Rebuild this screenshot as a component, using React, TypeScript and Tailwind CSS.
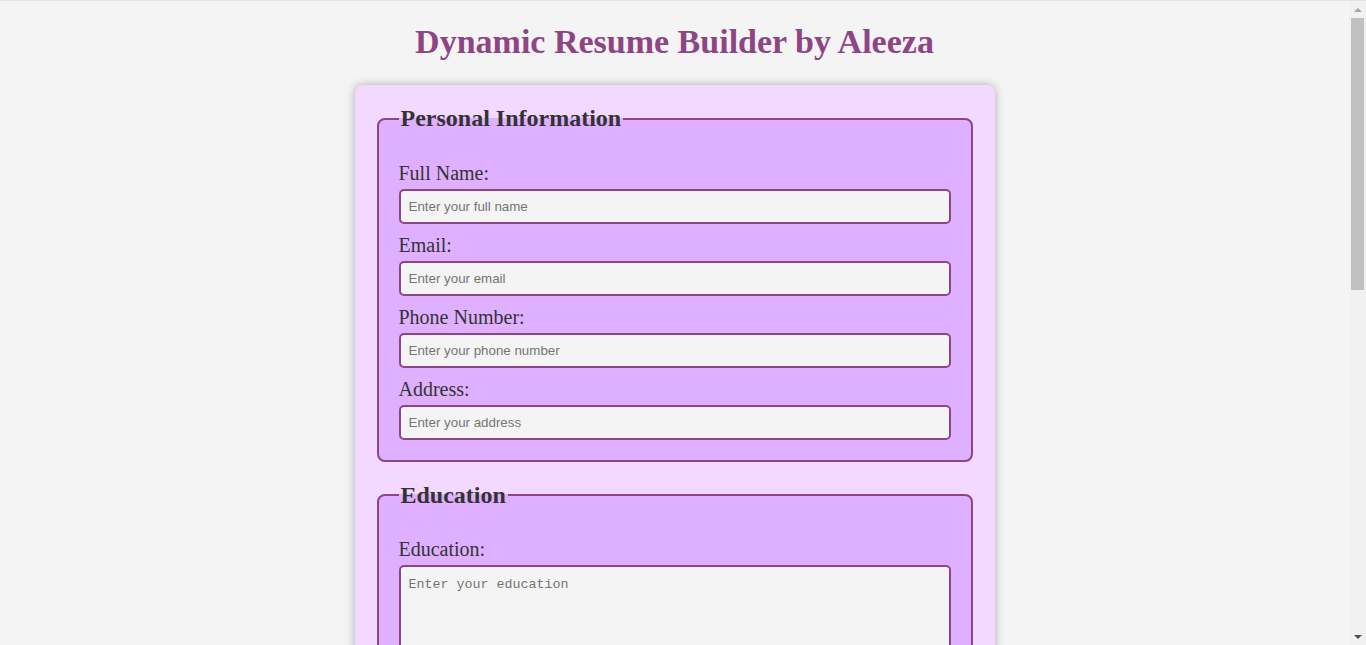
import React from "react";

type Field = { label: string; placeholder: string; kind?: "input" | "textarea" };

const sections: { title: string; fields: Field[] }[] = [
  {
    title: "Personal Information",
    fields: [
      { label: "Full Name:", placeholder: "Enter your full name" },
      { label: "Email:", placeholder: "Enter your email" },
      { label: "Phone Number:", placeholder: "Enter your phone number" },
      { label: "Address:", placeholder: "Enter your address" },
    ],
  },
  {
    title: "Education",
    fields: [{ label: "Education:", placeholder: "Enter your education", kind: "textarea" }],
  },
  {
    title: "Work Experience",
    fields: [{ label: "Experience:", placeholder: "Enter your work experience", kind: "textarea" }],
  },
  {
    title: "Skills",
    fields: [{ label: "Skills:", placeholder: "Enter your skills", kind: "textarea" }],
  },
];

function FormField({ label, placeholder, kind }: Field) {
  return (
    <div className="mt-[10px] first-of-type:mt-[9px]">
      <label className="block mb-[4px] text-[20px] leading-[23px] text-[#333]">{label}</label>
      {kind === "textarea" ? (
        <textarea
          placeholder={placeholder}
          className="block w-full h-[110px] px-2 py-[8px] bg-[#f4f4f4] border-2 border-[#8e4585] rounded-[5px] text-[13.33px] font-['Liberation_Mono',monospace] text-[#333] placeholder:text-[#757575] outline-none"
        />
      ) : (
        <input
          type="text"
          placeholder={placeholder}
          className="block w-full h-[35px] px-2 bg-[#f4f4f4] border-2 border-[#8e4585] rounded-[5px] text-[13.33px] font-['Liberation_Sans',Arial,sans-serif] text-[#333] placeholder:text-[#757575] outline-none"
        />
      )}
    </div>
  );
}

// the window's scrollbar, drawn as in the screenshot
function Scrollbar() {
  return (
    <div className="w-[17px] shrink-0 h-full bg-[#f1f1f1] flex flex-col items-center">
      <div className="h-[17px] flex items-center justify-center">
        <div className="w-0 h-0 border-x-[4px] border-x-transparent border-b-[4px] border-b-[#a3a3a3]" />
      </div>
      <div className="w-[13px] h-[272px] bg-[#c1c1c1]" />
      <div className="flex-1" />
      <div className="h-[17px] flex items-center justify-center">
        <div className="w-0 h-0 border-x-[4px] border-x-transparent border-t-[4px] border-t-[#505050]" />
      </div>
    </div>
  );
}

export default function App() {
  return (
    <div className="h-screen flex overflow-hidden bg-[#f4f4f4] border-t border-[#e2e2e2] font-['Liberation_Serif','Times_New_Roman',serif]">
      <main className="flex-1 min-w-0 overflow-hidden pb-10">
        <h1 className="mt-[21px] mb-[24px] text-center text-[34px] leading-[39px] font-bold text-[#8e4585]">
          Dynamic Resume Builder by Aleeza
        </h1>

        <div className="w-[640px] mx-auto p-5 bg-[#f3d9ff] rounded-[8px] shadow-[0_0_10px_rgba(0,0,0,0.3)]">
          {sections.map((s) => (
            <fieldset
              key={s.title}
              className="mx-[2px] mb-5 p-5 bg-[#dfb0ff] border-2 border-[#8e4585] rounded-[8px]"
            >
              <legend className="px-[2px] text-[24px] leading-[27.6px] font-bold text-[#333]">{s.title}</legend>
              {s.fields.map((f) => (
                <FormField key={f.label} {...f} />
              ))}
            </fieldset>
          ))}
          <button className="mx-[2px] px-5 py-2 bg-[#8e4585] text-white text-[18px] rounded-[5px]">
            Generate Resume
          </button>
        </div>
      </main>
      <Scrollbar />
    </div>
  );
}
